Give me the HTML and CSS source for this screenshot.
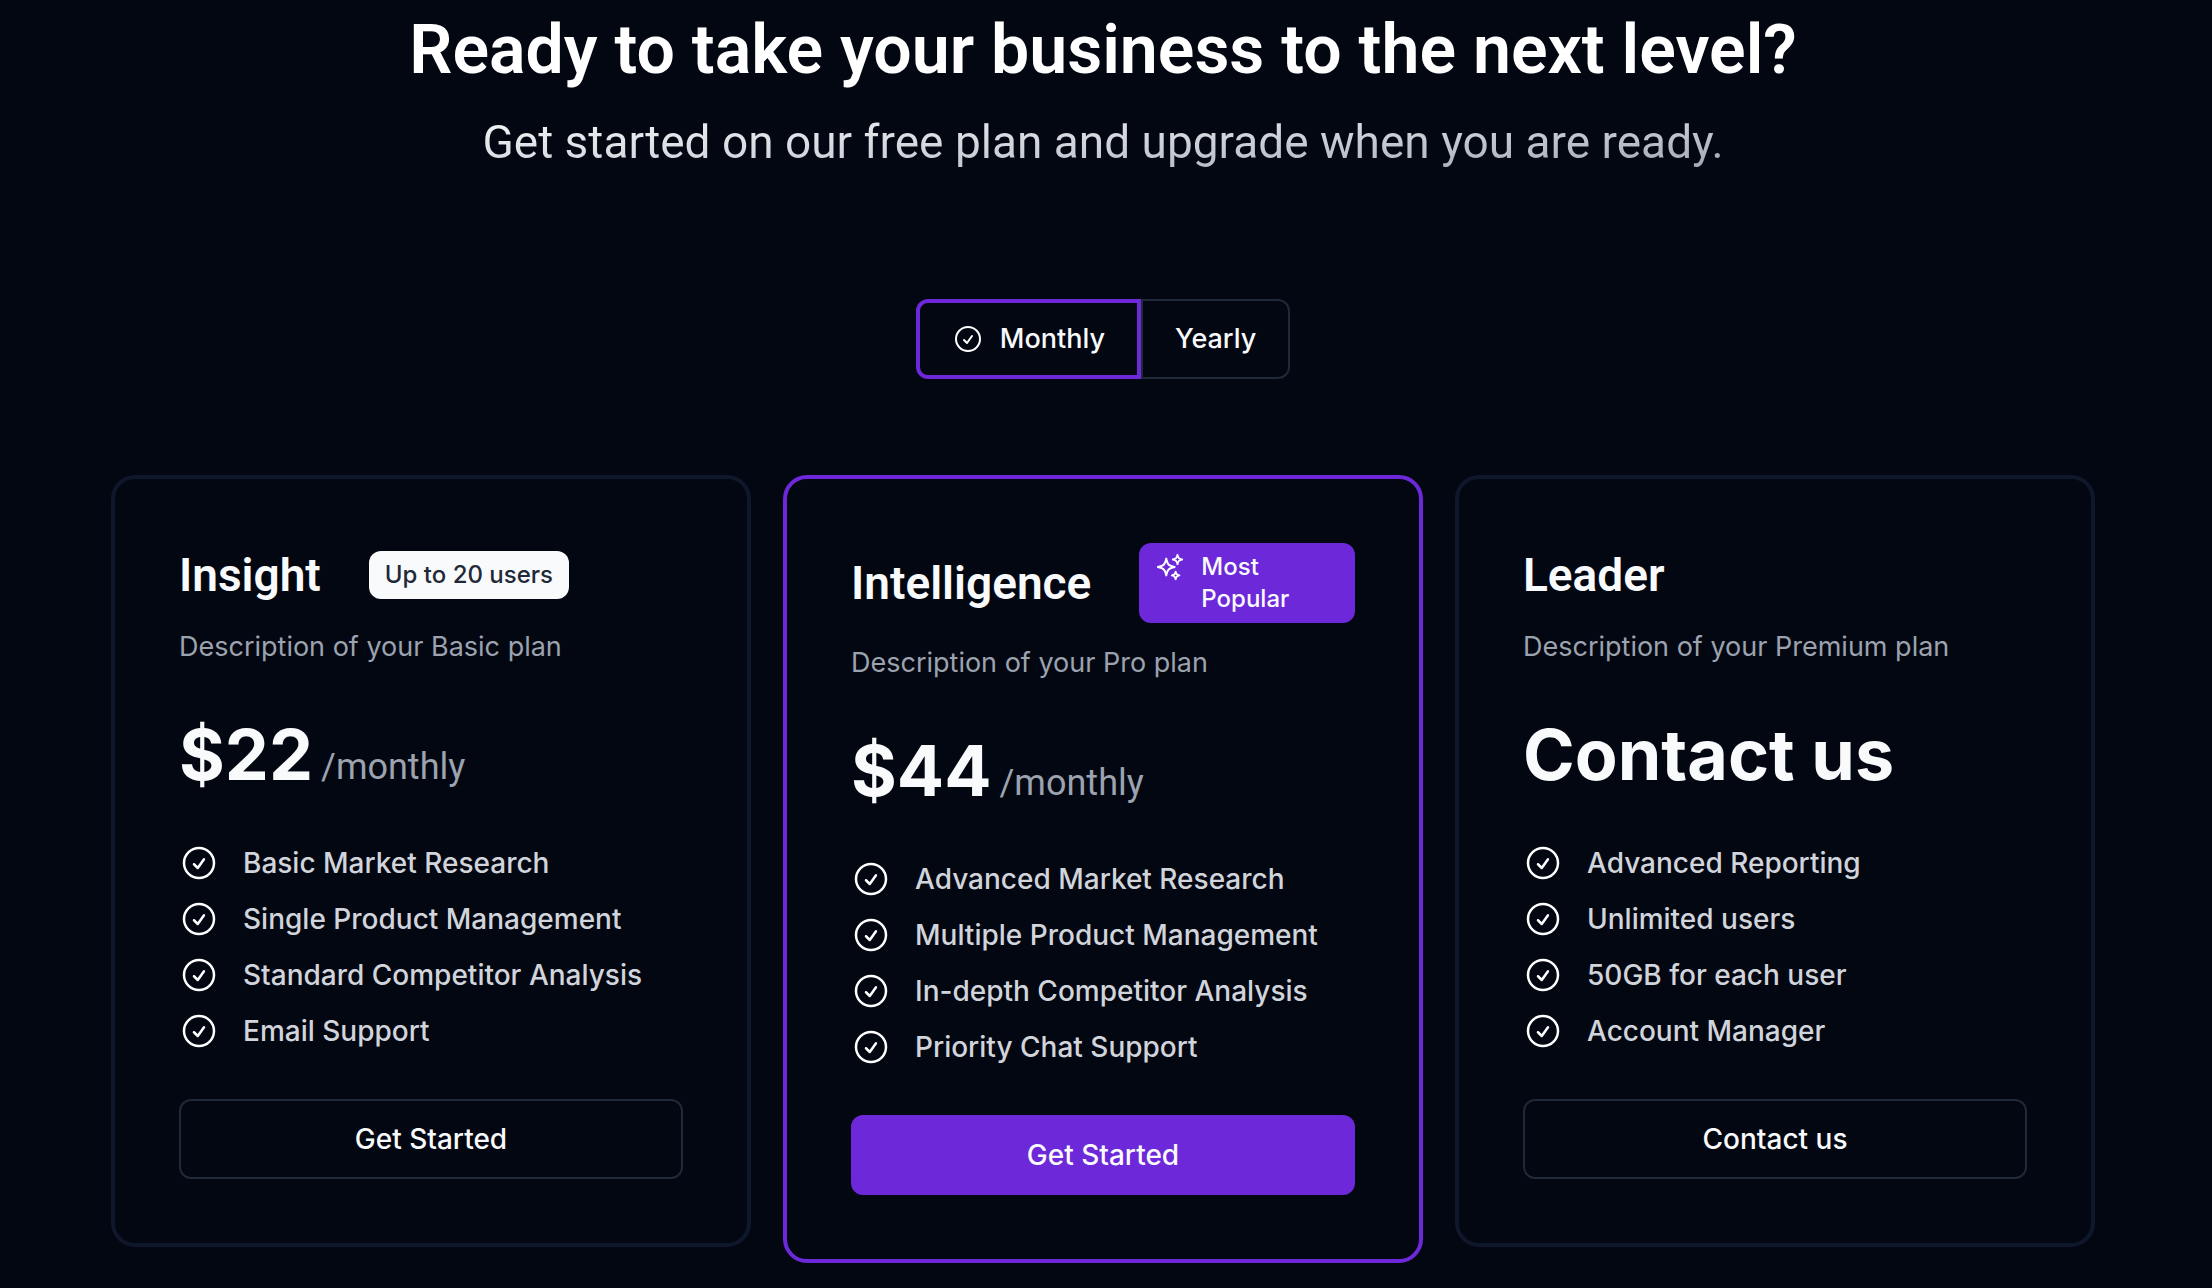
FILE: index.html
```html
<!DOCTYPE html>
<html lang="en">
<head>
  <meta charset="UTF-8">
  <meta name="viewport" content="width=device-width, initial-scale=1.0">
  <title>Pricing</title>
  <link rel="stylesheet" href="styles.css">
</head>
<body>
  <!-- shared icons -->
  <svg class="sprite" aria-hidden="true">
    <symbol id="check" viewBox="0 0 24 24">
      <path d="M9 12.75 11.25 15 15 9.75M21 12a9 9 0 1 1-18 0 9 9 0 0 1 18 0Z"/>
    </symbol>
    <symbol id="sparkles" viewBox="0 0 24 24">
      <path d="M9.813 15.904 9 18.75l-.813-2.846a4.5 4.5 0 0 0-3.09-3.09L2.25 12l2.846-.813a4.5 4.5 0 0 0 3.09-3.09L9 5.25l.813 2.846a4.5 4.5 0 0 0 3.09 3.09L15.75 12l-2.846.813a4.5 4.5 0 0 0-3.09 3.09ZM18.259 8.715 18 9.75l-.259-1.035a3.375 3.375 0 0 0-2.455-2.456L14.25 6l1.036-.259a3.375 3.375 0 0 0 2.455-2.456L18 2.25l.259 1.035a3.375 3.375 0 0 0 2.456 2.456L21.75 6l-1.035.259a3.375 3.375 0 0 0-2.456 2.456ZM16.894 20.567 16.5 21.75l-.394-1.183a2.25 2.25 0 0 0-1.423-1.423L13.5 18.75l1.183-.394a2.25 2.25 0 0 0 1.423-1.423l.394-1.183.394 1.183a2.25 2.25 0 0 0 1.423 1.423l1.183.394-1.183.394a2.25 2.25 0 0 0-1.423 1.423Z"/>
    </symbol>
  </svg>

  <main class="pricing">
    <header class="intro">
      <h1>Ready to take your business to the next level?</h1>
      <p class="subtitle">Get started on our free plan and upgrade when you are ready.</p>
    </header>

    <div class="toggle" role="group" aria-label="Billing period">
      <button class="period active" type="button" aria-pressed="true"><svg class="icon"><use href="#check"/></svg>Monthly</button>
      <button class="period" type="button" aria-pressed="false">Yearly</button>
    </div>

    <div class="plans">
      <section class="plan">
        <div class="plan-head">
          <h2>Insight</h2>
          <span class="badge light">Up to 20 users</span>
        </div>
        <p class="description">Description of your Basic plan</p>
        <p class="price">$22<span class="per">/monthly</span></p>
        <ul class="features">
          <li><svg class="icon"><use href="#check"/></svg>Basic Market Research</li>
          <li><svg class="icon"><use href="#check"/></svg>Single Product Management</li>
          <li><svg class="icon"><use href="#check"/></svg>Standard Competitor Analysis</li>
          <li><svg class="icon"><use href="#check"/></svg>Email Support</li>
        </ul>
        <button class="cta" type="button">Get Started</button>
      </section>

      <section class="plan popular">
        <div class="plan-head">
          <h2>Intelligence</h2>
          <span class="badge"><svg class="icon"><use href="#sparkles"/></svg><span>Most Popular</span></span>
        </div>
        <p class="description">Description of your Pro plan</p>
        <p class="price">$44<span class="per">/monthly</span></p>
        <ul class="features">
          <li><svg class="icon"><use href="#check"/></svg>Advanced Market Research</li>
          <li><svg class="icon"><use href="#check"/></svg>Multiple Product Management</li>
          <li><svg class="icon"><use href="#check"/></svg>In-depth Competitor Analysis</li>
          <li><svg class="icon"><use href="#check"/></svg>Priority Chat Support</li>
        </ul>
        <button class="cta" type="button">Get Started</button>
      </section>

      <section class="plan">
        <div class="plan-head">
          <h2>Leader</h2>
        </div>
        <p class="description">Description of your Premium plan</p>
        <p class="price">Contact us</p>
        <ul class="features">
          <li><svg class="icon"><use href="#check"/></svg>Advanced Reporting</li>
          <li><svg class="icon"><use href="#check"/></svg>Unlimited users</li>
          <li><svg class="icon"><use href="#check"/></svg>50GB for each user</li>
          <li><svg class="icon"><use href="#check"/></svg>Account Manager</li>
        </ul>
        <button class="cta" type="button">Contact us</button>
      </section>
    </div>
  </main>
</body>
</html>
```
FILE: styles.css
```css
* { box-sizing: border-box; }
body {
  margin: 0;
  padding-right: 6px;
  background: #030712;
  color: #f9fafb;
  font-family: Inter, "Liberation Sans", sans-serif;
  font-size: 28px;
  line-height: 40px;
}
h1, h2, p, ul { margin: 0; padding: 0; }
h1, h2, .subtitle, .per { font-family: Roboto, "Liberation Sans", sans-serif; }
button {
  font: inherit;
  font-weight: 500;
  color: inherit;
  background: none;
  border: 2px solid #1f2937;
  cursor: pointer;
}
.sprite { display: none; }
.icon {
  flex: none;
  width: 40px;
  height: 40px;
  fill: none;
  stroke: #fff;
  stroke-width: 1.5;
  stroke-linecap: round;
  stroke-linejoin: round;
}

.pricing {
  display: flex;
  flex-direction: column;
  align-items: center;
  padding: 10px 32px 24px;
}
.intro {
  display: flex;
  flex-direction: column;
  align-items: center;
  gap: 20px;
  margin-bottom: 125px;
  text-align: center;
}
h1 { font-size: 68px; line-height: 80px; font-weight: 600; color: #fff; }
.subtitle {
  font-size: 46px;
  line-height: 64px;
  background: linear-gradient(to bottom right, #f9fafb, #d1d5db, #9ca3af);
  -webkit-background-clip: text;
  background-clip: text;
  color: transparent;
}

.toggle { display: flex; margin-bottom: 96px; }
.period {
  display: flex;
  align-items: center;
  gap: 16px;
  height: 80px;
  padding: 0 32px;
  border-radius: 0 12px 12px 0;
  font-size: 27px;
}
.period.active { border: 4px solid #6d28d9; border-radius: 12px 0 0 12px; }
.period .icon { width: 32px; height: 32px; }

.plans {
  display: grid;
  grid-template-columns: repeat(3, 1fr);
  align-items: start;
  gap: 32px;
  width: 100%;
  max-width: 1984px;
}
.plan {
  padding: 64px;
  border: 4px solid #0f172a;
  border-radius: 24px;
}
.popular { border-color: #6d28d9; }
.plan-head {
  display: flex;
  align-items: center;
  gap: 48px;
  min-height: 64px;
  margin-bottom: 20px;
}
h2 { font-size: 46px; line-height: 64px; font-weight: 600; }
.badge {
  display: flex;
  gap: 16px;
  padding: 8px 16px;
  border-radius: 12px;
  background: #6d28d9;
  font-size: 24px;
  line-height: 32px;
  font-weight: 500;
}
.badge.light { background: #f9fafb; color: #1f2937; }
.badge .icon { width: 30px; height: 32px; }
.description { font-size: 27px; color: #9ca3af; }
.price {
  display: flex;
  align-items: flex-end;
  gap: 8px;
  margin: 48px 0;
  font-size: 70px;
  line-height: 80px;
  font-weight: 700;
}
.per { font-size: 36px; line-height: 56px; font-weight: 400; color: #9ca3af; }
.features {
  display: grid;
  gap: 16px;
  margin-bottom: 48px;
  list-style: none;
  font-weight: 500;
  color: #d1d5db;
}
.features li { display: flex; gap: 24px; }
.cta { width: 100%; height: 80px; border-radius: 12px; }
.popular .cta { background: #6d28d9; border-color: #6d28d9; }
```
